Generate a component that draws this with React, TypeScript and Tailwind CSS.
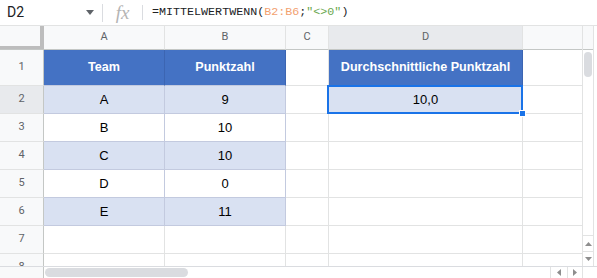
import React from 'react';

const SANS = "font-['Liberation_Sans',Arial,sans-serif]";
const UI = "font-['Roboto','Liberation_Sans',sans-serif]";

type CellKind = 'plain' | 'head' | 'band' | 'white';

interface CellProps {
  kind?: CellKind;
  text?: string;
  last?: boolean;
}

const kindClass: Record<CellKind, string> = {
  plain: 'bg-white border-[#e2e3e3]',
  head: 'bg-[#4472c4] border-r-[#3c65b2] border-b-[#c3cadf] text-white font-bold text-[12.6px]',
  band: 'bg-[#d9e1f2] border-[#c3cadf] text-black text-[13px]',
  white: 'bg-white border-[#c3cadf] text-black text-[13px]',
};

const Cell: React.FC<CellProps> = ({ kind = 'plain', text, last }) => (
  <div
    className={`flex items-center justify-center border-b ${SANS} ${last ? '' : 'border-r'} ${kindClass[kind]}`}
  >
    {text}
  </div>
);

const RowHead: React.FC<{ n: string; active?: boolean }> = ({ n, active }) => (
  <div
    className={`flex items-center justify-center border-b border-b-[#e2e3e3] border-r border-r-[#c4c7c5] text-[11px] text-[#5f6368] ${UI} ${active ? 'bg-[#e8eaed]' : 'bg-[#f8f9fa]'}`}
  >
    {n}
  </div>
);

const ColHead: React.FC<{ l: string; active?: boolean; last?: boolean }> = ({ l, active, last }) => (
  <div
    className={`flex items-center justify-center border-b border-b-[#c4c7c5] ${last ? '' : 'border-r border-r-[#e2e3e3]'} text-[11px] text-[#5f6368] ${UI} ${active ? 'bg-[#e8eaed]' : 'bg-[#f8f9fa]'}`}
  >
    {l}
  </div>
);

const rows: { n: string; a: string; b: string; kind: CellKind }[] = [
  { n: '3', a: 'B', b: '10', kind: 'white' },
  { n: '4', a: 'C', b: '10', kind: 'band' },
  { n: '5', a: 'D', b: '0', kind: 'white' },
  { n: '6', a: 'E', b: '11', kind: 'band' },
];

export default function App() {
  return (
    <div className="w-[597px] h-[278px] bg-white overflow-hidden flex flex-col">
      {/* Formula bar */}
      <div className="h-[26px] flex items-center border-b border-[#e2e3e3] shrink-0">
        <div className={`w-[102px] flex items-center justify-between pl-[7px] pr-[8px] text-[14px] text-[#202124] ${UI}`}>
          <span>D2</span>
          <svg width="8" height="5" viewBox="0 0 8 5"><path d="M0 0h8L4 5z" fill="#5f6368" /></svg>
        </div>
        <div className="w-px h-[18px] bg-[#dadce0]" />
        <div className="w-[39px] flex justify-center">
          <span className="font-['Liberation_Serif',serif] italic text-[19px] leading-none text-[#b4b4b4]">fx</span>
        </div>
        <div className="w-px h-[15px] bg-[#dadce0]" />
        <div className="pl-[9px] font-['Liberation_Mono',monospace] text-[11.7px] text-[#202124] whitespace-pre">
          =MITTELWERTWENN(<span className="text-[#f2a170]">B2:B6</span>;<span className="text-[#6aa84f]">"&lt;&gt;0"</span>)
        </div>
      </div>

      {/* Grid + vertical scrollbar */}
      <div className="flex h-[240px] shrink-0">
        <div className="relative w-[582px] h-[240px] overflow-hidden">
          <div className="grid grid-cols-[44px_121px_121px_43px_194px_59px] grid-rows-[24px_36px_28px_28px_28px_28px_28px_28px_28px]">
            {/* column header */}
            <div className="relative bg-[#f8f9fa] border-b border-[#c4c7c5]">
              <div className="absolute right-0 top-0 bottom-0 w-[4px] bg-[#bdbdbd]" />
              <div className="absolute left-0 right-0 bottom-0 h-[3px] bg-[#bdbdbd]" />
            </div>
            <ColHead l="A" />
            <ColHead l="B" />
            <ColHead l="C" />
            <ColHead l="D" active />
            <ColHead l="" last />

            {/* row 1 */}
            <RowHead n="1" />
            <Cell kind="head" text="Team" />
            <Cell kind="head" text="Punktzahl" />
            <Cell />
            <Cell kind="head" text="Durchschnittliche Punktzahl" />
            <Cell last />

            {/* row 2 */}
            <RowHead n="2" active />
            <Cell kind="band" text="A" />
            <Cell kind="band" text="9" />
            <Cell />
            <Cell kind="band" text="10,0" />
            <Cell last />

            {rows.map((r) => (
              <React.Fragment key={r.n}>
                <RowHead n={r.n} />
                <Cell kind={r.kind} text={r.a} />
                <Cell kind={r.kind} text={r.b} />
                <Cell />
                <Cell />
                <Cell last />
              </React.Fragment>
            ))}

            {['7', '8'].map((n) => (
              <React.Fragment key={n}>
                <RowHead n={n} />
                <Cell />
                <Cell />
                <Cell />
                <Cell />
                <Cell last />
              </React.Fragment>
            ))}
          </div>

          {/* selection on D2 */}
          <div className="absolute left-[327px] top-[59px] w-[196px] h-[29px] border-2 border-[#1a73e8] pointer-events-none" />
          <div className="absolute left-[519px] top-[84px] w-[7px] h-[7px] bg-[#1a73e8] border border-white" />
        </div>

        {/* vertical scrollbar */}
        <div className="w-[12px] border-l border-r border-[#e2e3e3] flex flex-col">
          <div className="h-[24px] bg-[#f8f9fa] border-b border-[#c4c7c5]" />
          <div className="flex-1 pt-[2px] flex justify-center">
            <div className="w-[8px] h-[25px] rounded-full bg-[#dadce0]" />
          </div>
          <div className="h-[16px] border-t border-[#e2e3e3] flex items-center justify-center">
            <svg width="7" height="4" viewBox="0 0 7 4"><path d="M0 4h7L3.5 0z" fill="#8e8e8e" /></svg>
          </div>
          <div className="h-[15px] border-t border-[#e2e3e3] flex items-center justify-center">
            <svg width="7" height="4" viewBox="0 0 7 4"><path d="M0 0h7L3.5 4z" fill="#8e8e8e" /></svg>
          </div>
        </div>
      </div>

      {/* horizontal scrollbar */}
      <div className="h-[12px] flex border-t border-[#dadce0]">
        <div className="w-[44px] bg-[#f8f9fa] border-r border-[#c4c7c5]" />
        <div className="w-[506px] flex items-center pl-[1px]">
          <div className="w-[143px] h-[9px] rounded-full bg-[#dadce0]" />
        </div>
        <div className="w-[17px] border-l border-[#e2e3e3] flex items-center justify-center">
          <svg width="4" height="7" viewBox="0 0 4 7"><path d="M4 0v7L0 3.5z" fill="#8e8e8e" /></svg>
        </div>
        <div className="w-[15px] border-l border-[#e2e3e3] flex items-center justify-center">
          <svg width="4" height="7" viewBox="0 0 4 7"><path d="M0 0v7L4 3.5z" fill="#8e8e8e" /></svg>
        </div>
        <div className="flex-1 border-l border-[#e2e3e3]" />
      </div>
    </div>
  );
}
